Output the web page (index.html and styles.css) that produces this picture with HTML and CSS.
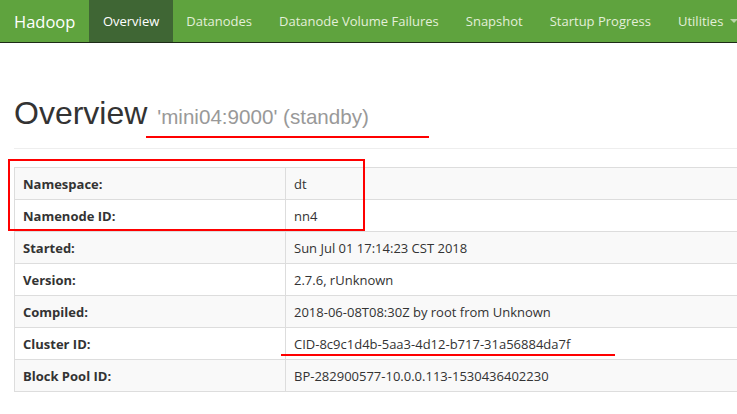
FILE: index.html
```html
<!DOCTYPE html>
<html lang="en">
<head>
    <meta charset="UTF-8">
    <meta name="viewport" content="width=device-width, initial-scale=1.0">
    <title>Namenode information</title>
    <link rel="stylesheet" href="styles.css">
</head>
<body>
    <nav class="navbar">
        <span class="brand">Hadoop</span>
        <a class="nav-link active" href="#">Overview</a>
        <a class="nav-link" href="#">Datanodes</a>
        <a class="nav-link" href="#">Datanode Volume Failures</a>
        <a class="nav-link" href="#">Snapshot</a>
        <a class="nav-link" href="#">Startup Progress</a>
        <a class="nav-link" href="#">Utilities <span class="caret"></span></a>
    </nav>

    <div class="container">
        <div class="page-header">
            <h1>Overview <small>'mini04:9000' (standby)</small></h1>
        </div>

        <table class="info-table">
            <tr><th>Namespace:</th><td>dt</td></tr>
            <tr><th>Namenode ID:</th><td>nn4</td></tr>
            <tr><th>Started:</th><td>Sun Jul 01 17:14:23 CST 2018</td></tr>
            <tr><th>Version:</th><td>2.7.6, rUnknown</td></tr>
            <tr><th>Compiled:</th><td>2018-06-08T08:30Z by root from Unknown</td></tr>
            <tr><th>Cluster ID:</th><td>CID-8c9c1d4b-5aa3-4d12-b717-31a56884da7f</td></tr>
            <tr><th>Block Pool ID:</th><td>BP-282900577-10.0.0.113-1530436402230</td></tr>
        </table>
    </div>

    <!-- hand drawn markup on the screenshot -->
    <div class="mark line title-line"></div>
    <div class="mark box"></div>
    <div class="mark line cid-line"></div>
</body>
</html>
```

FILE: styles.css
```css
body {
    margin: 0;
    font-family: "Open Sans", "Noto Sans", sans-serif;
    font-size: 13px;
    color: #333;
    background-color: #fff;
    overflow: hidden;
}

.navbar {
    display: flex;
    align-items: stretch;
    height: 42px;
    background-color: #5fa33e;
    border-bottom: 1px solid #1d2a17;
}

.brand {
    display: flex;
    align-items: center;
    padding: 0 14px;
    font-size: 16.5px;
    color: #fff;
}

.nav-link {
    display: flex;
    align-items: center;
    padding: 0 13.5px;
    font-size: 13px;
    color: #e3efd9;
    text-decoration: none;
    white-space: nowrap;
}

.nav-link.active {
    background-color: #3f6634;
    color: #fff;
}

.caret {
    display: inline-block;
    margin-left: 7px;
    border-top: 4px solid #b9d6a8;
    border-left: 4px solid transparent;
    border-right: 4px solid transparent;
}

.container {
    padding-left: 14px;
    overflow: hidden;
}

.page-header {
    margin: 53px 0 18px;
    padding-bottom: 17px;
    border-bottom: 1px solid #eee;
}

h1 {
    margin: 0;
    font-family: "Liberation Sans", Arial, sans-serif;
    font-size: 32px;
    font-weight: normal;
    line-height: 1.1;
    color: #333;
}

h1 small {
    margin-left: 1px;
    font-size: 20.6px;
    color: #999;
}

.info-table {
    width: 760px;
    border-collapse: collapse;
}

.info-table th,
.info-table td {
    height: 31px;
    padding: 0 8px;
    border: 1px solid #ddd;
    text-align: left;
    vertical-align: middle;
}

.info-table th {
    width: 254px;
    font-weight: bold;
}

.info-table tr:nth-child(odd) {
    background-color: #f9f9f9;
}

.mark {
    position: absolute;
    pointer-events: none;
}

.line {
    height: 2px;
    background-color: #f00;
}

.title-line {
    left: 146px;
    top: 136px;
    width: 283px;
}

.cid-line {
    left: 281px;
    top: 354px;
    width: 334px;
}

.box {
    left: 8px;
    top: 159px;
    width: 353px;
    height: 68px;
    border: 2px solid #f00;
}
```
